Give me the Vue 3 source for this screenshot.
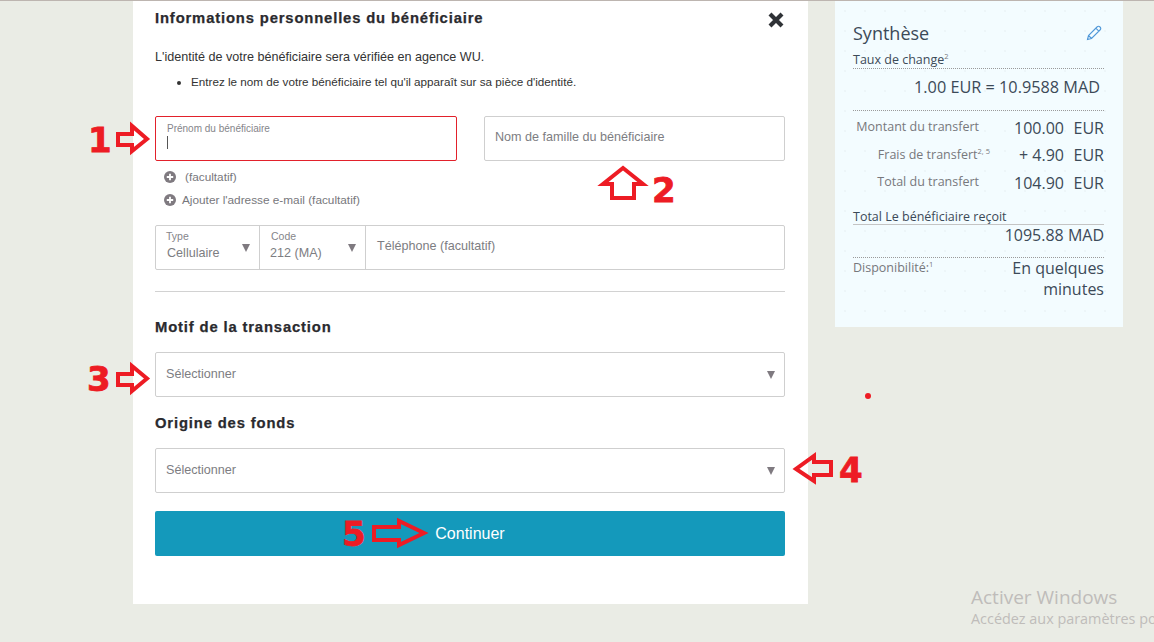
<script setup>
const arrows = [
  "M118,134 H132 V126 L147,139 L132,151 V145 H118 Z",
  "M612,198 V184 H603 L623,168 L643,184 H634 V198 Z",
  "M118,374 H132 V366 L147,378.5 L132,391 V385 H118 Z",
  "M831,462 H814 V456 L796,469 L814,481 V475 H831 Z",
  "M374,527 H399 V521 L424,533 L399,545 V540 H374 Z",
];
const digits = [
  { label: "1", x: 88, y: 152 },
  { label: "2", x: 652, y: 202 },
  { label: "3", x: 87, y: 391 },
  { label: "4", x: 839, y: 482 },
  { label: "5", x: 342, y: 546 },
];
const fees = [
  { label: "Montant du transfert", value: "100.00", sup: "" },
  { label: "Frais de transfert", value: "+ 4.90", sup: "2, 5" },
  { label: "Total du transfert", value: "104.90", sup: "" },
];
</script>

<template>
  <div class="page">
    <div class="panel">
      <div class="panel-head">
        <h2>Informations personnelles du bénéficiaire</h2>
        <svg class="close" width="16" height="16" viewBox="0 0 16 16">
          <path d="M2,2 L14,14 M14,2 L2,14" stroke="#2f3236" stroke-width="4.2" />
        </svg>
      </div>
      <p class="intro">L'identité de votre bénéficiaire sera vérifiée en agence WU.</p>
      <ul class="hints">
        <li>Entrez le nom de votre bénéficiaire tel qu'il apparaît sur sa pièce d'identité.</li>
      </ul>

      <div class="name-row">
        <div class="field focused">
          <span class="mini">Prénom du bénéficiaire</span>
          <span class="caret"></span>
        </div>
        <div class="field"><span class="hint">Nom de famille du bénéficiaire</span></div>
      </div>

      <div class="add-link first">
        <svg class="plus" width="12" height="12" viewBox="0 0 12 12">
          <circle cx="6" cy="6" r="6" fill="#7f7a80" />
          <path d="M6,2.8 V9.2 M2.8,6 H9.2" stroke="#fff" stroke-width="1.8" />
        </svg>
        <span class="gap-wide">(facultatif)</span>
      </div>
      <div class="add-link">
        <svg class="plus" width="12" height="12" viewBox="0 0 12 12">
          <circle cx="6" cy="6" r="6" fill="#7f7a80" />
          <path d="M6,2.8 V9.2 M2.8,6 H9.2" stroke="#fff" stroke-width="1.8" />
        </svg>
        <span>Ajouter l'adresse e-mail (facultatif)</span>
      </div>

      <div class="phone">
        <div class="cell type">
          <span class="mini">Type</span>
          <span class="val">Cellulaire</span>
          <i class="tri"></i>
        </div>
        <div class="cell code">
          <span class="mini">Code</span>
          <span class="val">212 (MA)</span>
          <i class="tri"></i>
        </div>
        <div class="cell tel"><span class="hint">Téléphone (facultatif)</span></div>
      </div>

      <hr />

      <h3 class="motif">Motif de la transaction</h3>
      <div class="select"><span class="hint">Sélectionner</span><i class="tri"></i></div>
      <h3 class="origine">Origine des fonds</h3>
      <div class="select"><span class="hint">Sélectionner</span><i class="tri"></i></div>
      <button class="continue">Continuer</button>
    </div>

    <aside class="summary">
      <div class="sum-head">
        <span>Synthèse</span>
        <svg width="16" height="16" viewBox="0 0 16 16" fill="none" stroke="#4f97d8" stroke-width="1.1">
          <path d="M1.5,14.5 L2.5,10.5 L11,2 A1.4,1.4 0 0 1 14,5 L5.5,13.5 Z M9.8,3.2 L12.8,6.2 M2.5,10.5 L5.5,13.5" />
        </svg>
      </div>
      <div class="sum-title dotted">Taux de change<sup>2</sup></div>
      <div class="rate dotted">1.00 EUR = 10.9588 MAD</div>
      <div class="fees">
        <div v-for="fee in fees" :key="fee.label" class="fee">
          <span class="fee-label">{{ fee.label }}<sup v-if="fee.sup" class="hang">{{ fee.sup }}</sup></span>
          <span class="fee-value">{{ fee.value }}</span>
          <span class="fee-cur">EUR</span>
        </div>
      </div>
      <div class="sum-title receives">Total Le bénéficiaire reçoit</div>
      <div class="received dotted">1095.88 MAD</div>
      <div class="avail">
        <span class="avail-label">Disponibilité:<sup>1</sup></span>
        <span class="avail-value">En quelques minutes</span>
      </div>
    </aside>

    <div class="watermark">
      <div class="wm-big">Activer Windows</div>
      <div class="wm-small">Accédez aux paramètres pour activer Windows.</div>
    </div>

    <!-- annotations drawn on top of the screenshot -->
    <svg class="marks" width="1154" height="642" viewBox="0 0 1154 642">
      <path v-for="d in arrows" :key="d" :d="d" fill="none" stroke="#ed1c24" stroke-width="4" stroke-linejoin="miter" />
      <text v-for="n in digits" :key="n.label" :x="n.x" :y="n.y" class="digit">{{ n.label }}</text>
      <circle cx="868" cy="396" r="3" fill="#ed1c24" />
    </svg>
  </div>
</template>

<style>
body {
  margin: 0;
  background: #eaece5;
}
</style>

<style scoped>
.page {
  position: relative;
  display: flex;
  gap: 27px;
  width: 1154px;
  height: 642px;
  padding-left: 133px;
  box-sizing: border-box;
  overflow: hidden;
  background: #eaece5;
  border-top: 1px solid #bdb5b0;
  font-family: "Liberation Sans", Arial, sans-serif;
  color: #333;
}

.panel {
  width: 675px;
  height: 603px;
  box-sizing: border-box;
  padding: 0 23px 0 22px;
  background: #fff;
}

.panel-head {
  display: flex;
  justify-content: space-between;
  align-items: center;
  height: 34px;
}

.close {
  margin-top: 4px;
  margin-right: 1px;
}

h2,
h3 {
  margin: 0;
  font-size: 14.8px;
  line-height: 17px;
  font-weight: 700;
  letter-spacing: 0.85px;
  color: #2a2a2e;
  -webkit-text-stroke: 0.25px #2a2a2e;
}

.intro {
  margin: 14px 0 0;
  font-size: 12.6px;
  line-height: 16px;
  color: #333;
}

.hints {
  margin: 9px 0 0;
  padding-left: 36px;
  font-size: 11.7px;
  line-height: 16px;
}

.name-row {
  display: flex;
  gap: 27px;
  margin-top: 26px;
}

.field {
  position: relative;
  flex: 1;
  height: 45px;
  box-sizing: border-box;
  padding: 0 10px;
  border: 1px solid #cfcfcf;
  border-radius: 2px;
  display: flex;
  align-items: center;
}

.field .hint {
  margin-top: -4px;
}

.field.focused {
  border-color: #e2212b;
  display: block;
  flex: 0 0 302px;
  padding: 0 11px;
}

.mini {
  display: block;
  font-size: 10px;
  line-height: 10px;
  color: #85858a;
}

.focused .mini {
  padding-top: 7px;
}

.caret {
  display: block;
  width: 1px;
  height: 13px;
  margin-top: 2px;
  background: #555;
}

.hint {
  font-size: 12.6px;
  color: #7d7d82;
}

.add-link {
  display: flex;
  align-items: center;
  gap: 6px;
  height: 23px;
  padding-left: 9px;
  font-size: 11.8px;
  color: #77777c;
}

.add-link.first {
  margin-top: 4px;
}

.gap-wide {
  margin-left: 3px;
}

.phone {
  display: flex;
  height: 45px;
  margin-top: 14px;
  box-sizing: border-box;
  border: 1px solid #cfcfcf;
  border-radius: 2px;
}

.cell {
  position: relative;
  box-sizing: border-box;
  padding: 5px 10px 0 11px;
  border-right: 1px solid #cfcfcf;
}

.cell .mini {
  font-size: 10.5px;
}

.type {
  width: 104px;
}

.type .mini {
  margin-left: -1px;
}

.code {
  width: 106px;
}

.code .val {
  margin-left: -1px;
}

.tel {
  flex: 1;
  border-right: 0;
  display: flex;
  align-items: center;
  padding-top: 0;
  padding-bottom: 4px;
}

.val {
  display: block;
  margin-top: 5px;
  font-size: 12.6px;
  color: #7d7d82;
}

.tri {
  position: absolute;
  right: 9px;
  top: 50%;
  margin-top: -4px;
  width: 0;
  height: 0;
  border-left: 4.5px solid transparent;
  border-right: 4.5px solid transparent;
  border-top: 8px solid #7f7a80;
}

hr {
  height: 1px;
  margin: 21px 0 0;
  border: 0;
  background: #d2d2d2;
}

.motif {
  margin-top: 27px;
}

.origine {
  margin-top: 18px;
}

.select {
  position: relative;
  display: flex;
  align-items: center;
  height: 45px;
  margin-top: 16px;
  box-sizing: border-box;
  padding: 0 10px;
  border: 1px solid #cfcfcf;
  border-radius: 2px;
}

.select .hint {
  margin-top: -2px;
}

.continue {
  display: block;
  width: 100%;
  height: 45px;
  margin-top: 18px;
  padding: 0;
  border: 0;
  border-radius: 2px;
  background: #1499bb;
  color: #fff;
  font-family: inherit;
  font-size: 16px;
}

.summary {
  width: 288px;
  height: 326px;
  box-sizing: border-box;
  padding: 20px 19px 0 18px;
  background-color: #f3fcff;
  background-image: radial-gradient(circle, #e4eef0 0.6px, transparent 0.8px);
  background-size: 20px 20px;
  font-family: "Open Sans", sans-serif;
  color: #3c4a58;
}

.sum-head {
  display: flex;
  justify-content: space-between;
  align-items: center;
  padding-right: 2px;
  font-size: 18px;
  line-height: 24px;
}

.sum-title {
  font-size: 12.5px;
  line-height: 17px;
  margin-top: 6px;
}

.dotted {
  border-bottom: 1px dotted #9a9a9a;
}

sup {
  font-size: 7.5px;
  line-height: 0;
  color: #77787c;
}

.hang {
  margin-right: -11px;
}

.rate {
  height: 42px;
  box-sizing: border-box;
  padding: 6px 4px 0 0;
  text-align: right;
  font-size: 16.25px;
  line-height: 24px;
}

.fees {
  margin-top: 3px;
}

.fee {
  display: flex;
  align-items: center;
  height: 27.5px;
}

.fee-label {
  width: 126px;
  text-align: right;
  font-size: 12.5px;
  color: #77787c;
  margin-top: -2px;
}

.fee-value {
  flex: 1;
  text-align: right;
  font-size: 16px;
}

.fee-cur {
  width: 40px;
  text-align: right;
  font-size: 16px;
}

.receives {
  margin-top: 12px;
  line-height: 15px;
  border-bottom: 1px solid #c4c4c4;
}

.received {
  height: 33px;
  box-sizing: border-box;
  text-align: right;
  font-size: 16px;
  line-height: 20px;
}

.avail {
  display: flex;
  justify-content: space-between;
}

.avail-label {
  font-size: 12.5px;
  line-height: 19px;
  color: #77787c;
}

.avail-value {
  width: 110px;
  text-align: right;
  font-size: 16px;
  line-height: 21px;
}

.watermark {
  position: absolute;
  left: 971px;
  top: 583px;
  white-space: nowrap;
  font-family: "Open Sans", sans-serif;
  color: #bfbcba;
}

.wm-big {
  font-size: 19px;
  line-height: 26px;
}

.wm-small {
  font-size: 14.4px;
  line-height: 18px;
}

.marks {
  position: absolute;
  left: 0;
  top: -1px;
  pointer-events: none;
}

.digit {
  font-family: "DejaVu Sans", sans-serif;
  font-weight: 700;
  font-size: 34px;
  fill: #ed1c24;
  stroke: #ed1c24;
  stroke-width: 0.8px;
}
</style>
